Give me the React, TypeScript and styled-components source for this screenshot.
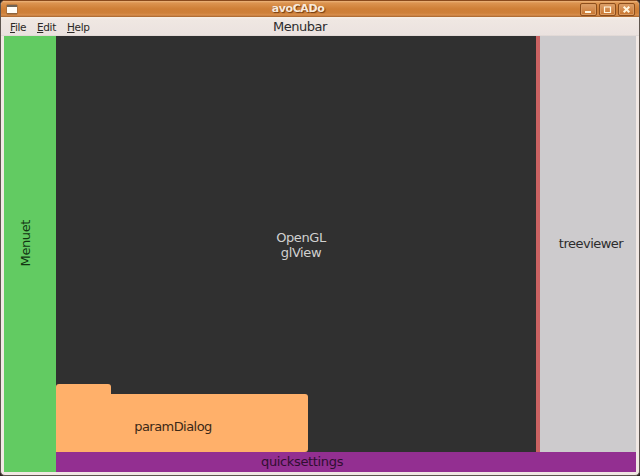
import React from "react";
import styled, { createGlobalStyle } from "styled-components";

const GlobalStyle = createGlobalStyle`
  * { box-sizing: border-box; }
  body { margin: 0; background: #2c2420; font-family: "DejaVu Sans", sans-serif; }
`;

const Window = styled.div`
  width: 640px;
  height: 476px;
  display: flex;
  flex-direction: column;
  overflow: hidden;
  background: #f1e8e4;
  border: 1px solid #5d554f;
  border-top-color: #8a4a1c;
  border-radius: 5px;
`;

const TitleBar = styled.header`
  height: 16px;
  flex: none;
  display: grid;
  grid-template-columns: 60px 1fr 56px;
  align-items: center;
  padding: 0 3px 0 5px;
  background: linear-gradient(#edb57c 0, #dc9450 2px, #cf7f36 8px, #ce8139 12px, #d98f4c 14px, #a5642d 16px);
`;

const Title = styled.h1`
  margin: 0;
  padding-right: 50px;
  text-align: center;
  font-size: 11px;
  line-height: 14px;
  letter-spacing: -0.4px;
  color: #f8eadb;
  text-shadow: 1px 1px 1px #713a10;
`;

const Controls = styled.div`
  display: flex;
  gap: 2px;
`;

const ControlButton = styled.button`
  width: 17px;
  height: 13px;
  flex: none;
  padding: 0;
  display: grid;
  place-items: center;
  border: 1px solid #8c4e1c;
  border-radius: 2px;
  background: linear-gradient(#dda06a, #c8752e);
  box-shadow: inset 0 0 0 1px #db9c62;
`;

const MenuBar = styled.nav`
  height: 19px;
  flex: none;
  display: grid;
  grid-template-columns: 272px 1fr;
  background: linear-gradient(#f8f0e5 0, #efe7e2 3px, #ebe2df 18px, #d9d1ce 19px);
`;

const Menus = styled.div`
  display: flex;
  padding-left: 9px;
`;

const MenuItem = styled.span<{ $width: number }>`
  width: ${(p) => p.$width}px;
  font-size: 10.5px;
  line-height: 20px;
  letter-spacing: -0.35px;
  color: #2b2826;
  &::first-letter { text-decoration: underline; }
`;

const Label = styled.span<{ $color?: string; $spacing?: number }>`
  font-size: 13px;
  line-height: 15px;
  letter-spacing: ${(p) => p.$spacing ?? -0.4}px;
  color: ${(p) => p.$color ?? "#2c2c2c"};
  white-space: pre-line;
  text-align: center;
`;

const MenuCaption = styled(Label)`
  text-align: left;
  line-height: 20px;
`;

const Workspace = styled.main`
  flex: 1;
  display: grid;
  grid-template-columns: 52px 1fr;
  margin: 0 3px 3px;
`;

const Menuet = styled.aside`
  display: grid;
  place-items: center;
  padding: 0 9px 22px 0;
  background: #62cb62;
`;

const VerticalLabel = styled(Label)`
  writing-mode: vertical-rl;
  transform: rotate(180deg);
`;

const MainColumn = styled.div`
  display: grid;
  grid-template-rows: 1fr 20px;
`;

const Views = styled.div`
  display: grid;
  grid-template-columns: 480px 4px 1fr;
`;

const GlView = styled.section`
  display: grid;
  grid-template-rows: 348px 68px;
  background: #303030;
`;

const GlCaption = styled.div`
  display: flex;
  justify-content: center;
  padding: 194px 0 0 10px;
`;

const ParamDialog = styled.div`
  width: 252px;
  display: grid;
  grid-template-rows: 10px 58px;
`;

const DialogTab = styled.div`
  width: 55px;
  background: #ffb06a;
  border-radius: 3px 3px 0 0;
`;

const DialogBody = styled.div`
  display: flex;
  justify-content: center;
  padding: 25px 18px 0 0;
  background: #ffb06a;
  border-radius: 0 3px 3px 0;
`;

const Splitter = styled.div`
  background: #ca6262;
`;

const TreeViewer = styled.aside`
  display: flex;
  justify-content: center;
  padding: 200px 0 0 6px;
  background: #cdcbcd;
`;

const QuickSettings = styled.footer`
  display: flex;
  align-items: center;
  padding: 0 0 2px 205px;
  background: #932f91;
`;

const WindowIcon = () => (
  <svg width="12" height="11" viewBox="0 0 12 11">
    <rect x="0.5" y="0.5" width="11" height="10" rx="1" fill="#8f643a" />
    <rect x="1" y="1" width="10" height="2" fill="#6f6355" />
    <rect x="1" y="3" width="10" height="6" fill="#fffdf7" />
  </svg>
);

const Glyph = ({ kind }: { kind: "min" | "max" | "close" }) => (
  <svg width="9" height="9" viewBox="0 0 9 9" fill="none" stroke="#fff6df">
    {kind === "min" && <path d="M1 7H7" strokeWidth="2" />}
    {kind === "max" && <path d="M1.5 2H7.5V7.5H1.5ZM1 2H8" strokeWidth="1.2" />}
    {kind === "close" && <path d="M1.7 1.7L7.3 7.3M7.3 1.7L1.7 7.3" strokeWidth="2" />}
  </svg>
);

export default function App() {
  return (
    <>
      <GlobalStyle />
      <Window>
        <TitleBar>
          <WindowIcon />
          <Title>avoCADo</Title>
          <Controls>
            <ControlButton aria-label="Minimize"><Glyph kind="min" /></ControlButton>
            <ControlButton aria-label="Maximize"><Glyph kind="max" /></ControlButton>
            <ControlButton aria-label="Close"><Glyph kind="close" /></ControlButton>
          </Controls>
        </TitleBar>
        <MenuBar>
          <Menus>
            <MenuItem $width={27}>File</MenuItem>
            <MenuItem $width={30}>Edit</MenuItem>
            <MenuItem $width={30}>Help</MenuItem>
          </Menus>
          <MenuCaption $spacing={-0.5}>Menubar</MenuCaption>
        </MenuBar>
        <Workspace>
          <Menuet><VerticalLabel $color="#123512" $spacing={-0.4}>Menuet</VerticalLabel></Menuet>
          <MainColumn>
            <Views>
              <GlView>
                <GlCaption><Label $color="#d0d0d0" $spacing={-0.4}>{"OpenGL\nglView"}</Label></GlCaption>
                <ParamDialog>
                  <DialogTab />
                  <DialogBody><Label $color="#3c2816" $spacing={-0.55}>paramDialog</Label></DialogBody>
                </ParamDialog>
              </GlView>
              <Splitter />
              <TreeViewer><Label $spacing={-0.5}>treeviewer</Label></TreeViewer>
            </Views>
            <QuickSettings><Label $color="#300e30" $spacing={-0.35}>quicksettings</Label></QuickSettings>
          </MainColumn>
        </Workspace>
      </Window>
    </>
  );
}
